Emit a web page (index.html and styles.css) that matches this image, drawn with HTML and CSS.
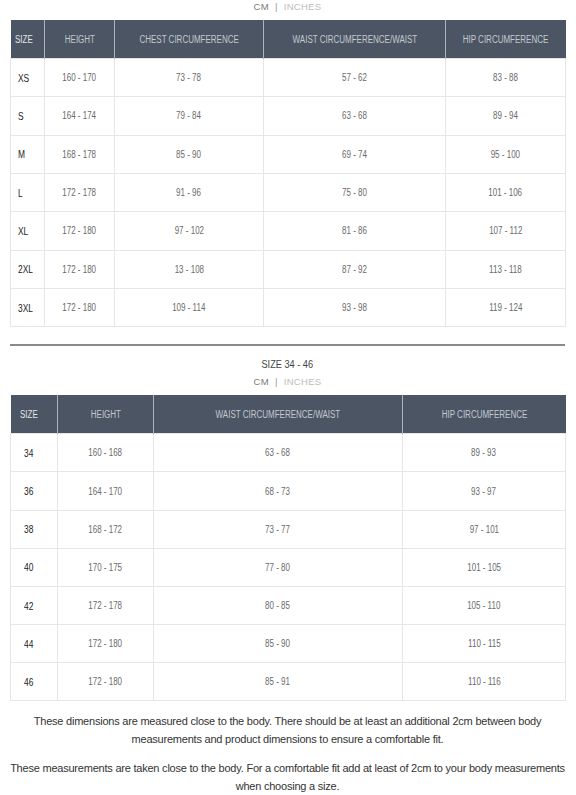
FILE: index.html
```html
<!DOCTYPE html>
<html>
<head>
<meta charset="utf-8">
<link rel="stylesheet" href="styles.css">
</head>
<body>
<div class="page">
  <div class="units"><span class="on">CM</span><span class="sep">|</span><span class="off">INCHES</span></div>
  <table class="chart chart-a">
    <colgroup><col class="c1"><col class="c2"><col class="c3"><col class="c4"><col class="c5"></colgroup>
    <thead>
      <tr><th class="first"><span class="t">SIZE</span></th><th><span class="t">HEIGHT</span></th><th><span class="t">CHEST CIRCUMFERENCE</span></th><th><span class="t">WAIST CIRCUMFERENCE/WAIST</span></th><th><span class="t">HIP CIRCUMFERENCE</span></th></tr>
    </thead>
    <tbody>
      <tr><td class="first"><span class="t">XS</span></td><td><span class="t">160 - 170</span></td><td><span class="t">73 - 78</span></td><td><span class="t">57 - 62</span></td><td><span class="t">83 - 88</span></td></tr>
      <tr><td class="first"><span class="t">S</span></td><td><span class="t">164 - 174</span></td><td><span class="t">79 - 84</span></td><td><span class="t">63 - 68</span></td><td><span class="t">89 - 94</span></td></tr>
      <tr><td class="first"><span class="t">M</span></td><td><span class="t">168 - 178</span></td><td><span class="t">85 - 90</span></td><td><span class="t">69 - 74</span></td><td><span class="t">95 - 100</span></td></tr>
      <tr><td class="first"><span class="t">L</span></td><td><span class="t">172 - 178</span></td><td><span class="t">91 - 96</span></td><td><span class="t">75 - 80</span></td><td><span class="t">101 - 106</span></td></tr>
      <tr><td class="first"><span class="t">XL</span></td><td><span class="t">172 - 180</span></td><td><span class="t">97 - 102</span></td><td><span class="t">81 - 86</span></td><td><span class="t">107 - 112</span></td></tr>
      <tr><td class="first"><span class="t">2XL</span></td><td><span class="t">172 - 180</span></td><td><span class="t">13 - 108</span></td><td><span class="t">87 - 92</span></td><td><span class="t">113 - 118</span></td></tr>
      <tr><td class="first"><span class="t">3XL</span></td><td><span class="t">172 - 180</span></td><td><span class="t">109 - 114</span></td><td><span class="t">93 - 98</span></td><td><span class="t">119 - 124</span></td></tr>
    </tbody>
  </table>
  <hr class="divider">
  <div class="title"><span class="t">SIZE 34 - 46</span></div>
  <div class="units units-b"><span class="on">CM</span><span class="sep">|</span><span class="off">INCHES</span></div>
  <table class="chart chart-b">
    <colgroup><col class="d1"><col class="d2"><col class="d3"><col class="d4"></colgroup>
    <thead>
      <tr><th class="first"><span class="t">SIZE</span></th><th><span class="t">HEIGHT</span></th><th><span class="t">WAIST CIRCUMFERENCE/WAIST</span></th><th><span class="t">HIP CIRCUMFERENCE</span></th></tr>
    </thead>
    <tbody>
      <tr><td class="first"><span class="t">34</span></td><td><span class="t">160 - 168</span></td><td><span class="t">63 - 68</span></td><td><span class="t">89 - 93</span></td></tr>
      <tr><td class="first"><span class="t">36</span></td><td><span class="t">164 - 170</span></td><td><span class="t">68 - 73</span></td><td><span class="t">93 - 97</span></td></tr>
      <tr><td class="first"><span class="t">38</span></td><td><span class="t">168 - 172</span></td><td><span class="t">73 - 77</span></td><td><span class="t">97 - 101</span></td></tr>
      <tr><td class="first"><span class="t">40</span></td><td><span class="t">170 - 175</span></td><td><span class="t">77 - 80</span></td><td><span class="t">101 - 105</span></td></tr>
      <tr><td class="first"><span class="t">42</span></td><td><span class="t">172 - 178</span></td><td><span class="t">80 - 85</span></td><td><span class="t">105 - 110</span></td></tr>
      <tr><td class="first"><span class="t">44</span></td><td><span class="t">172 - 180</span></td><td><span class="t">85 - 90</span></td><td><span class="t">110 - 115</span></td></tr>
      <tr><td class="first"><span class="t">46</span></td><td><span class="t">172 - 180</span></td><td><span class="t">85 - 91</span></td><td><span class="t">110 - 116</span></td></tr>
    </tbody>
  </table>
  <p class="note note-a">These dimensions are measured close to the body. There should be at least an additional 2cm between body measurements and product dimensions to ensure a comfortable fit.</p>
  <p class="note note-b">These measurements are taken close to the body. For a comfortable fit add at least of 2cm to your body measurements when choosing a size.</p>
</div>
</body>
</html>
```
FILE: styles.css
```css
html, body {
  margin: 0;
  padding: 0;
  background: #fff;
}
body {
  font-family: "Liberation Sans", Arial, sans-serif;
  color: #333;
}
.page {
  padding: 0 11px 0 10px;
}
.t {
  display: inline-block;
  transform: scaleX(0.8);
  transform-origin: center;
  white-space: nowrap;
}
.units {
  text-align: center;
  font-size: 9.5px;
  line-height: 14px;
  letter-spacing: 0.3px;
  height: 14px;
}
.units .on { color: #7a7a7a; }
.units .off { color: #bdbdbd; }
.units .sep { color: #999; margin: 0 6px; }
.chart {
  width: 555px;
  border-collapse: collapse;
  table-layout: fixed;
  font-size: 10px;
}
.chart-a { margin-top: 6px; }
.chart th {
  background: #4b5563;
  color: #c4c9cf;
  font-weight: normal;
  height: 38px;
  padding: 0;
  border-left: 1px solid #aeb4bc;
  text-align: center;
}
.chart th.first { border-left: none; text-align: left; padding-left: 4px; color: #e2e5e8; }
.chart .first .t { transform-origin: left center; }
.chart td {
  height: 37.33px;
  padding: 0;
  text-align: center;
  color: #6a6a6a;
  border: 1px solid #e6e6e6;
}
.chart-b td { height: 37.17px; }
.chart td.first { text-align: left; padding-left: 7px; color: #222; font-size: 10.5px; }
.chart-b td.first { padding-left: 13px; }
.chart-b th.first { padding-left: 9px; }
.c1 { width: 34px; }
.c2 { width: 70px; }
.c3 { width: 149px; }
.c4 { width: 182px; }
.c5 { width: 120px; }
.d1 { width: 47px; }
.d2 { width: 96px; }
.d3 { width: 249px; }
.d4 { width: 163px; }
.divider {
  border: 0;
  border-top: 2px solid #8a8a8a;
  margin: 17px 0 0 0;
  height: 0;
}
.title {
  text-align: center;
  font-size: 11.5px;
  color: #444;
  line-height: 16px;
  margin-top: 10px;
}
.units-b { margin-top: 3px; }
.chart-b { margin-top: 6px; }
.note {
  text-align: center;
  font-size: 11px;
  line-height: 18px;
  letter-spacing: -0.22px;
  color: #333;
  margin: 0;
}
.note-a { margin-top: 11px; padding: 0 20px; }
.note-b { margin-top: 11px; padding: 0; }
```
